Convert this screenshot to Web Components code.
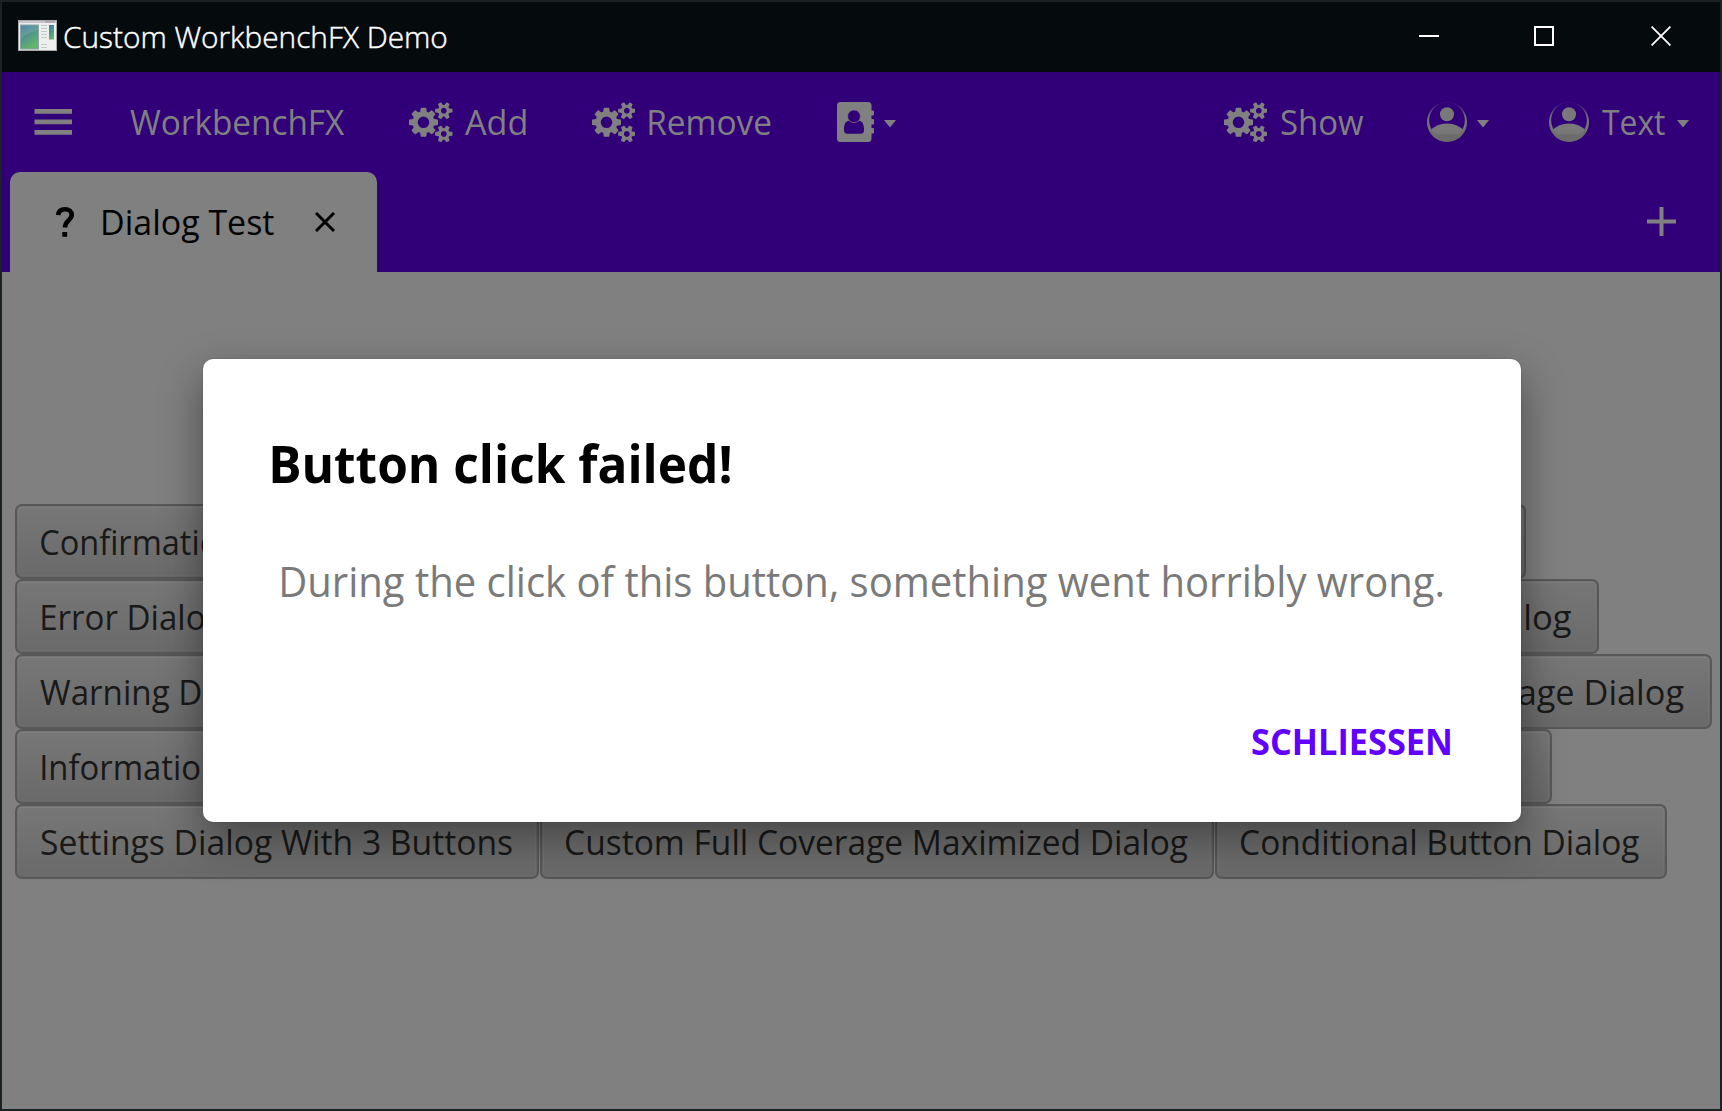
<!DOCTYPE html>
<html lang="en"><head><meta charset="utf-8"><title>Custom WorkbenchFX Demo</title>
<style>
html,body{margin:0;height:100%;overflow:hidden;background:#808080}
body{font-family:"Open Sans","Noto Sans",sans-serif}
</style></head><body>
<workbench-window></workbench-window>
<script>
const define=(name,html,connected)=>customElements.define(name,class extends HTMLElement{
  constructor(){super();this.attachShadow({mode:'open'}).innerHTML=html;}
  connectedCallback(){connected&&connected.call(this,this.shadowRoot);}
});

/* One line of text condensed so that its ink spans exactly `w` pixels. */
const ctx=document.createElement('canvas').getContext('2d');
define('fit-text',`<style>:host{display:block;flex:none;white-space:nowrap}
span{display:inline-block;transform-origin:0 50%;line-height:inherit}</style><span></span>`,function(r){
  const s=r.querySelector('span');s.textContent=this.getAttribute('text');
  const cs=getComputedStyle(this);
  ctx.font=`${cs.fontWeight} ${cs.fontSize} ${cs.fontFamily}`;
  const m=ctx.measureText(s.textContent),w=+this.getAttribute('w');
  const k=w/(m.actualBoundingBoxRight+m.actualBoundingBoxLeft);
  this.style.width=w+'px';
  s.style.transform=`translateX(${m.actualBoundingBoxLeft*k}px) scaleX(${k})`;
});

define('icon-cogs',`<style>:host{display:block;flex:none}svg{display:block}</style>
<svg width="43.5" height="40.6" viewBox="0 0 1920 1792"><path fill="#808080" d="M896 896q0-106-75-181t-181-75-181 75-75 181 75 181 181 75 181-75 75-181zm768 512q0-52-38-90t-90-38-90 38-38 90q0 53 37.500 90.500t90.500 37.500 90.500-37.500 37.500-90.500zm0-1024q0-52-38-90t-90-38-90 38-38 90q0 53 37.500 90.500t90.500 37.500 90.500-37.500 37.500-90.500zm-384 421v185q0 10-7 19.500t-16 10.500l-155 24q-11 35-32 76 34 48 90 115 7 11 7 20 0 12-7 19-23 30-82.500 89.500t-78.500 59.500q-11 0-21-7l-115-90q-37 19-77 31-11 108-23 155-7 24-30 24h-186q-11 0-20-7.500t-10-17.500l-23-153q-34-10-75-31l-118 89q-7 7-20 7-11 0-21-8-144-133-144-160 0-9 7-19 10-14 41-53t47-61q-23-44-35-82l-152-24q-10-1-17-9.500t-7-19.500v-185q0-10 7-19.500t16-10.500l155-24q11-35 32-76-34-48-90-115-7-11-7-20 0-12 7-20 22-30 82-89t79-59q11 0 21 7l115 90q34-18 77-32 11-108 23-154 7-24 30-24h186q11 0 20 7.500t10 17.500l23 153q34 10 75 31l118-89q8-7 20-7 11 0 21 8 144 133 144 160 0 8-7 19-12 16-42 54t-45 60q23 48 34 82l152 23q10 2 17 10.500t7 19.500zm640 533v140q0 16-149 31-12 27-30 52 51 113 51 138 0 4-4 7-122 71-124 71-8 0-46-47t-52-68q-20 2-30 2t-30-2q-14 21-52 68t-46 47q-2 0-124-71-4-3-4-7 0-25 51-138-18-25-30-52-149-15-149-31v-140q0-16 149-31 13-29 30-52-51-113-51-138 0-4 4-7 4-2 35-20t59-34 30-16q8 0 46 46.500t52 67.500q20-2 30-2t30 2q51-71 92-112l6-2q4 0 124 70 4 3 4 7 0 25-51 138 17 23 30 52 149 15 149 31zm0-1024v140q0 16-149 31-12 27-30 52 51 113 51 138 0 4-4 7-122 71-124 71-8 0-46-47t-52-68q-20 2-30 2t-30-2q-14 21-52 68t-46 47q-2 0-124-71-4-3-4-7 0-25 51-138-18-25-30-52-149-15-149-31v-140q0-16 149-31 13-29 30-52-51-113-51-138 0-4 4-7 4-2 35-20t59-34 30-16q8 0 46 46.500t52 67.500q20-2 30-2t30 2q51-71 92-112l6-2q4 0 124 70 4 3 4 7 0 25-51 138 17 23 30 52 149 15 149 31z"/></svg>`);

define('icon-book',`<style>:host{display:block;flex:none}svg{display:block}</style>
<svg width="37" height="40" viewBox="0 0 37 40"><path fill="#808080" d="M3.500 0H31q3.500 0 3.500 3.500V8.500H36q1 0 1 1V12.500q0 1-1 1H34.500V17H36q1 0 1 1V21.500q0 1-1 1H34.500V26H36q1 0 1 1V30.500q0 1-1 1H34.500V36.500q0 3.500-3.500 3.500H3.500Q0 40 0 36.500V3.500Q0 0 3.500 0Z"/>
<path fill="#310078" d="M12 18.800C8.500 19 7 22.500 7 28Q7 31.800 10.300 31.800H23.700Q27 31.800 27 28C27 22.500 25.500 19 22 18.800Q17 22.800 12 18.800Z"/><circle cx="17" cy="14.300" r="6.300" fill="#310078" stroke="#808080" stroke-width=".5"/></svg>`);

define('icon-avatar',`<style>:host{display:block;flex:none}svg{display:block}</style>
<svg width="40" height="40" viewBox="0 0 40 40"><defs><linearGradient id="g" x1="0" y1="0" x2="0" y2="1"><stop offset="0" stop-color="#808080" stop-opacity=".1"/><stop offset=".35" stop-color="#7c7c7c" stop-opacity=".85"/><stop offset=".6" stop-color="#747474"/><stop offset="1" stop-color="#696969"/></linearGradient>
<linearGradient id="b" x1="0" y1="0" x2="0" y2="1"><stop offset="0" stop-color="#7b7b7b"/><stop offset=".55" stop-color="#777"/><stop offset=".6" stop-color="#6c6c6c"/><stop offset="1" stop-color="#686868"/></linearGradient><clipPath id="c"><circle cx="20" cy="20" r="19.500"/></clipPath></defs>
<circle cx="20" cy="12.200" r="7" fill="#797979"/><path clip-path="url(#c)" fill="url(#b)" d="M3 29Q9 21.500 20 21.500T37 29L38 40H2Z"/><path fill="url(#g)" fill-rule="evenodd" d="M20 0a20 20 0 1 0 .01 0ZM20 .5a17.800 17.800 0 1 1-.01 0Z"/></svg>`);

define('icon-caret',`<style>:host{display:block;flex:none;padding-top:3px}svg{display:block}</style><svg width="12" height="8" viewBox="0 0 12 8"><path fill="#808080" d="M0 0H12L6 7.500Z"/></svg>`);

define('title-bar',`<style>
:host{display:flex;align-items:center;height:70px;background:#050a0c;padding:0 49px 0 16px;box-sizing:border-box;color:#fff;font-size:29.5px;font-weight:300;line-height:40px}
svg{display:block;flex:none}.app{margin:-3px 6.500px 0 0}fit-text{-webkit-text-stroke:.45px #fff}
.ctl{margin-left:auto;display:flex;gap:95px;margin-top:-2px}</style>
<svg class="app" width="39" height="31" viewBox="0 0 39 31"><defs><linearGradient id="a" x1="0" y1="0" x2=".5" y2="1"><stop offset="0" stop-color="#3c75a5"/><stop offset="1" stop-color="#62b56c"/></linearGradient></defs>
<path fill="#a9a9a9" d="M0 0H39V31H0Z"/><path fill="#eee" d="M1 1H38V30H1Z"/><path fill="#c9c5ca" d="M1 1H38V3H1Z"/><path fill="#a8a0a6" d="M27 1H37V2.500H27Z"/><path fill="#8da3a6" d="M2 4.500H21V29.500H2Z"/><path fill="url(#a)" d="M3 5.500H20V28.500H3Z"/><path fill="#fff" opacity=".12" d="M3 19Q9 12 20 10.500V5.500H3Z"/>
<path stroke="#c7c7c7" d="M23 5.500H29M23 8.500H29M23 11.500H29M23 14.500H29M23 17.500H29M23 24.500H29M23 27.500H29"/><path fill="url(#a)" d="M31 5H36V19.500H31Z"/></svg>
<fit-text text="Custom WorkbenchFX Demo" w="382.500"></fit-text>
<div class="ctl"><svg width="20" height="20"><path fill="#fff" d="M0 9H20V11H0Z"/></svg><svg width="20" height="20"><path fill="none" stroke="#fff" stroke-width="2" d="M1 1H19V19H1Z"/></svg><svg width="20" height="20" style="margin-left:2px"><path stroke="#fff" stroke-width="1.800" d="M.6.600 19.400 19.400M19.400.600.600 19.400"/></svg></div>`);

define('tool-item',`<style>:host{display:flex;align-items:center;flex:none}</style><slot></slot>`);

define('tool-bar',`<style>:host{display:flex;align-items:center;height:100px;padding:0 31px 0 32px;box-sizing:border-box;background:#310078;color:#808080;font-size:35px;line-height:48px}
.r{margin-left:auto;display:flex;align-items:center}svg{display:block}</style>
<svg width="38" height="26"><path fill="#808080" d="M.500 0H38V4.700H.500ZM.500 10.500H38V15.200H.500ZM.500 21H38V25.700H.500Z"/></svg>
<fit-text style="margin-left:58px" text="WorkbenchFX" w="215"></fit-text>
<tool-item style="margin-left:64px"><icon-cogs></icon-cogs><fit-text style="margin-left:12.500px" text="Add" w="61"></fit-text></tool-item>
<tool-item style="margin-left:65.500px"><icon-cogs></icon-cogs><fit-text style="margin-left:14px" text="Remove" w="121.500"></fit-text></tool-item>
<tool-item style="margin-left:66px"><icon-book></icon-book><icon-caret style="margin-left:10.500px"></icon-caret></tool-item>
<div class="r"><tool-item><icon-cogs></icon-cogs><fit-text style="margin-left:13.500px" text="Show" w="82.500"></fit-text></tool-item>
<tool-item style="margin-left:64px"><icon-avatar></icon-avatar><icon-caret style="margin-left:10px"></icon-caret></tool-item>
<tool-item style="margin-left:60px"><icon-avatar></icon-avatar><fit-text style="margin-left:13px" text="Text" w="63"></fit-text><icon-caret style="margin-left:12px"></icon-caret></tool-item></div>`);

define('tab-bar',`<style>:host{display:flex;justify-content:space-between;align-items:center;height:100px;padding:0 44px 0 8px;box-sizing:border-box;background:#310078}
.tab{display:flex;align-items:center;width:367px;height:100px;box-sizing:border-box;padding-left:45.500px;background:#808080;border-radius:10px 10px 0 0;color:#000;font-size:35px;line-height:48px}svg{display:block;flex:none}fit-text{margin:0 41px 0 29px}</style>
<div class="tab"><svg width="18" height="30" viewBox="0 0 18 30"><path fill="none" stroke="#000" stroke-width="4.600" d="M2.300 8.200C2.500 4.300 5 2.300 9 2.300S15.700 4.500 15.700 8C15.700 13 9 13.500 9 20.500"/><path d="M6.300 25H11.200V29.800H6.300Z"/></svg>
<fit-text text="Dialog Test" w="171"></fit-text><svg width="20" height="20"><path stroke="#000" stroke-width="3" d="M1 1 19 19M19 1 1 19"/></svg></div>
<svg width="29" height="29" style="margin-top:-1px"><path fill="#808080" d="M12.500 0H16.500V12.500H29V16.500H16.500V29H12.500V16.500H0V12.500H12.500Z"/></svg>`);

define('fx-button',`<style>:host{display:flex;align-items:center;box-sizing:border-box;height:75px;flex:none;border:2px solid #585858;border-radius:7px;background:linear-gradient(#777,#6a6a6a);box-shadow:inset 0 0 0 .5px #58585880,inset 0 0 0 2px #ffffff08,inset 0 2px 0 #ffffff08;padding:0 26px 0 24px;color:#191919;font-size:35px;line-height:48px;overflow:hidden}</style><slot></slot>`);

define('demo-content',`<style>:host{display:flex;flex-direction:column;flex:1;background:#808080;padding:232px 0 0 13px}
.row{display:flex;height:75px;gap:1px}.row.split{justify-content:space-between}
.e{justify-content:flex-end}</style>
<div class="row split" style="width:1511px"><fx-button style="width:350px"><fit-text text="Confirmation Dialog" w="302"></fit-text></fx-button><fx-button class="e" style="width:300px"></fx-button></div>
<div class="row split" style="width:1584px"><fx-button style="width:260px"><fit-text style="margin-left:1px" text="Error Dialog" w="181.500"></fit-text></fx-button><fx-button class="e" style="width:400px"><fit-text text="Dialog" w="98.500"></fit-text></fx-button></div>
<div class="row split" style="width:1696.500px"><fx-button style="width:290px"><fit-text style="margin-left:-1px" text="Warning Dialog" w="235.500"></fit-text></fx-button><fx-button class="e" style="width:500px"><fit-text text="Full Coverage Dialog" w="321"></fit-text></fx-button></div>
<div class="row split" style="width:1536.500px"><fx-button style="width:350px"><fit-text style="margin-left:1px" text="Information Dialog" w="284"></fit-text></fx-button><fx-button class="e" style="width:300px"></fx-button></div>
<div class="row"><fx-button style="width:524px"><fit-text text="Settings Dialog With 3 Buttons" w="471.500"></fit-text></fx-button><fx-button style="width:674px"><fit-text text="Custom Full Coverage Maximized Dialog" w="622"></fit-text></fx-button><fx-button style="width:451.500px"><fit-text text="Conditional Button Dialog" w="398.500"></fit-text></fx-button></div>`);

define('error-dialog',`<style>:host{display:flex;flex-direction:column;box-sizing:border-box;width:1318px;height:462.500px;border-radius:10px;background:#fff;box-shadow:0 17px 44px rgba(0,0,0,.42),0 0 2px rgba(0,0,0,.2);padding:69px 71px 0 69px}
.h{font-size:51.500px;font-weight:700;line-height:70px;color:#000}.b{font-size:42.500px;line-height:60px;color:#7a7a7a;margin:53px 0 0 9.500px}.a{font-size:35px;font-weight:700;line-height:48px;color:#6200ff;margin:107px 0 0;align-self:flex-end}</style>
<fit-text class="h" text="Button click failed!" w="458"></fit-text>
<fit-text class="b" text="During the click of this button, something went horribly wrong." w="1161"></fit-text>
<fit-text class="a" text="SCHLIESSEN" w="198.500"></fit-text>`);

define('workbench-window',`<style>:host{display:flex;flex-direction:column;position:relative;box-sizing:border-box;width:1722px;height:1111px;border:2px solid #1c2224;overflow:hidden}
error-dialog{position:absolute;left:201px;top:357px}</style>
<title-bar></title-bar><tool-bar></tool-bar><tab-bar></tab-bar><demo-content></demo-content><error-dialog></error-dialog>`);
</script></body></html>
